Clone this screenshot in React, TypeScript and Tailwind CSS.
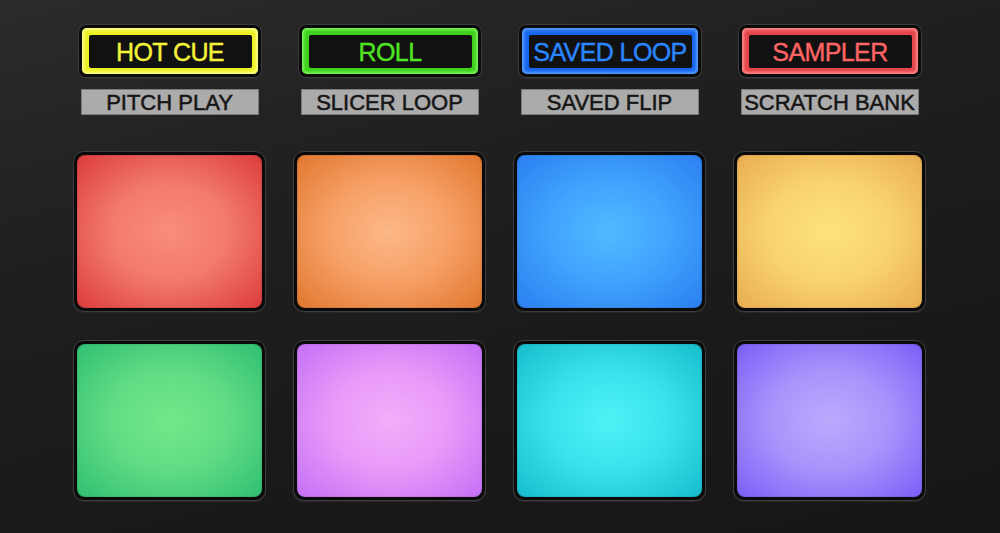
import React from "react";

type Mode = { label: string; sub: string; frame: string; glow: string; text: string };

const modes: Mode[] = [
  { label: "HOT CUE", sub: "PITCH PLAY", frame: "bg-[#eef026]", glow: "shadow-[inset_0_0_3px_2px_#fbff8a]", text: "text-[#f4f33a]" },
  { label: "ROLL", sub: "SLICER LOOP", frame: "bg-[#3dd01c]", glow: "shadow-[inset_0_0_3px_2px_#7cf35a]", text: "text-[#4fe322]" },
  { label: "SAVED LOOP", sub: "SAVED FLIP", frame: "bg-[#1766ee]", glow: "shadow-[inset_0_0_3px_2px_#5a9cff]", text: "text-[#2a86ff]" },
  { label: "SAMPLER", sub: "SCRATCH BANK", frame: "bg-[#e4454a]", glow: "shadow-[inset_0_0_3px_2px_#ff8a8a]", text: "text-[#ff6464]" },
];

const pads: string[] = [
  "bg-[radial-gradient(ellipse_at_center,#f98d7e_0%,#f27a6b_45%,#dc3b3d_100%)]",
  "bg-[radial-gradient(ellipse_at_center,#fcb886_0%,#f7a168_45%,#e0772e_100%)]",
  "bg-[radial-gradient(ellipse_at_center,#50baff_0%,#41a4fd_45%,#2a7ff0_100%)]",
  "bg-[radial-gradient(ellipse_at_center,#fde47a_0%,#f9d46e_45%,#e8ad50_100%)]",
  "bg-[radial-gradient(ellipse_at_center,#74e88b_0%,#62dc84_45%,#2fbf72_100%)]",
  "bg-[radial-gradient(ellipse_at_center,#f3aefa_0%,#e89af8_45%,#c56ef6_100%)]",
  "bg-[radial-gradient(ellipse_at_center,#4cf3f6_0%,#3ae3ec_45%,#16bccb_100%)]",
  "bg-[radial-gradient(ellipse_at_center,#bcaafd_0%,#a994fb_45%,#7a5ef8_100%)]",
];

function ModeButton({ m }: { m: Mode }) {
  return (
    <div className="flex flex-col items-center">
      <div className="w-[184px] h-[54px] rounded-[8px] bg-[#0b0b0b] border border-[#3b3b3b] p-[3px] shadow-[0_1px_0_#2c2c2c]">
        <div className={`h-full w-full rounded-[5px] ${m.frame} ${m.glow} pl-[7px] pr-[6px] pt-[7px] pb-[6px]`}>
          <div className={`h-full w-full rounded-[2px] bg-[#111111] flex items-center justify-center pt-[1px] text-[25px] leading-none tracking-[-0.6px] [-webkit-text-stroke:0.4px_currentColor] ${m.text}`}>
            {m.label}
          </div>
        </div>
      </div>
      <div className="mt-[11px] w-[178px] h-[26px] bg-[#ababab] border border-[#7a7a7a] flex items-center justify-center pt-[2px] text-[22px] leading-none text-[#151515] [-webkit-text-stroke:0.5px_#151515]">
        {m.sub}
      </div>
    </div>
  );
}

function Pad({ cls }: { cls: string }) {
  return (
    <div className="w-[193px] h-[161px] rounded-[11px] bg-[#0a0a0a] border border-[#3e3e3e] p-[3px] shadow-[0_1px_1px_#2a2a2a]">
      <div className={`h-full w-full rounded-[8px] ${cls} shadow-[inset_0_0_2px_rgba(0,0,0,0.25)]`} />
    </div>
  );
}

export default function App() {
  return (
    <div className="w-[1000px] h-[533px] overflow-hidden bg-[linear-gradient(165deg,#2b2b2c_0%,#1f1f20_35%,#19191a_70%,#161617_100%)] pl-[73px] pt-[24px] font-['Liberation_Sans',Arial,sans-serif]">
      <div className="grid grid-cols-[repeat(4,193px)] gap-x-[27px]">
        {modes.map((m) => (
          <ModeButton key={m.label} m={m} />
        ))}
      </div>
      <div className="mt-[36px] grid grid-cols-[repeat(4,193px)] gap-x-[27px] gap-y-[28px]">
        {pads.map((p, i) => (
          <Pad key={i} cls={p} />
        ))}
      </div>
    </div>
  );
}
